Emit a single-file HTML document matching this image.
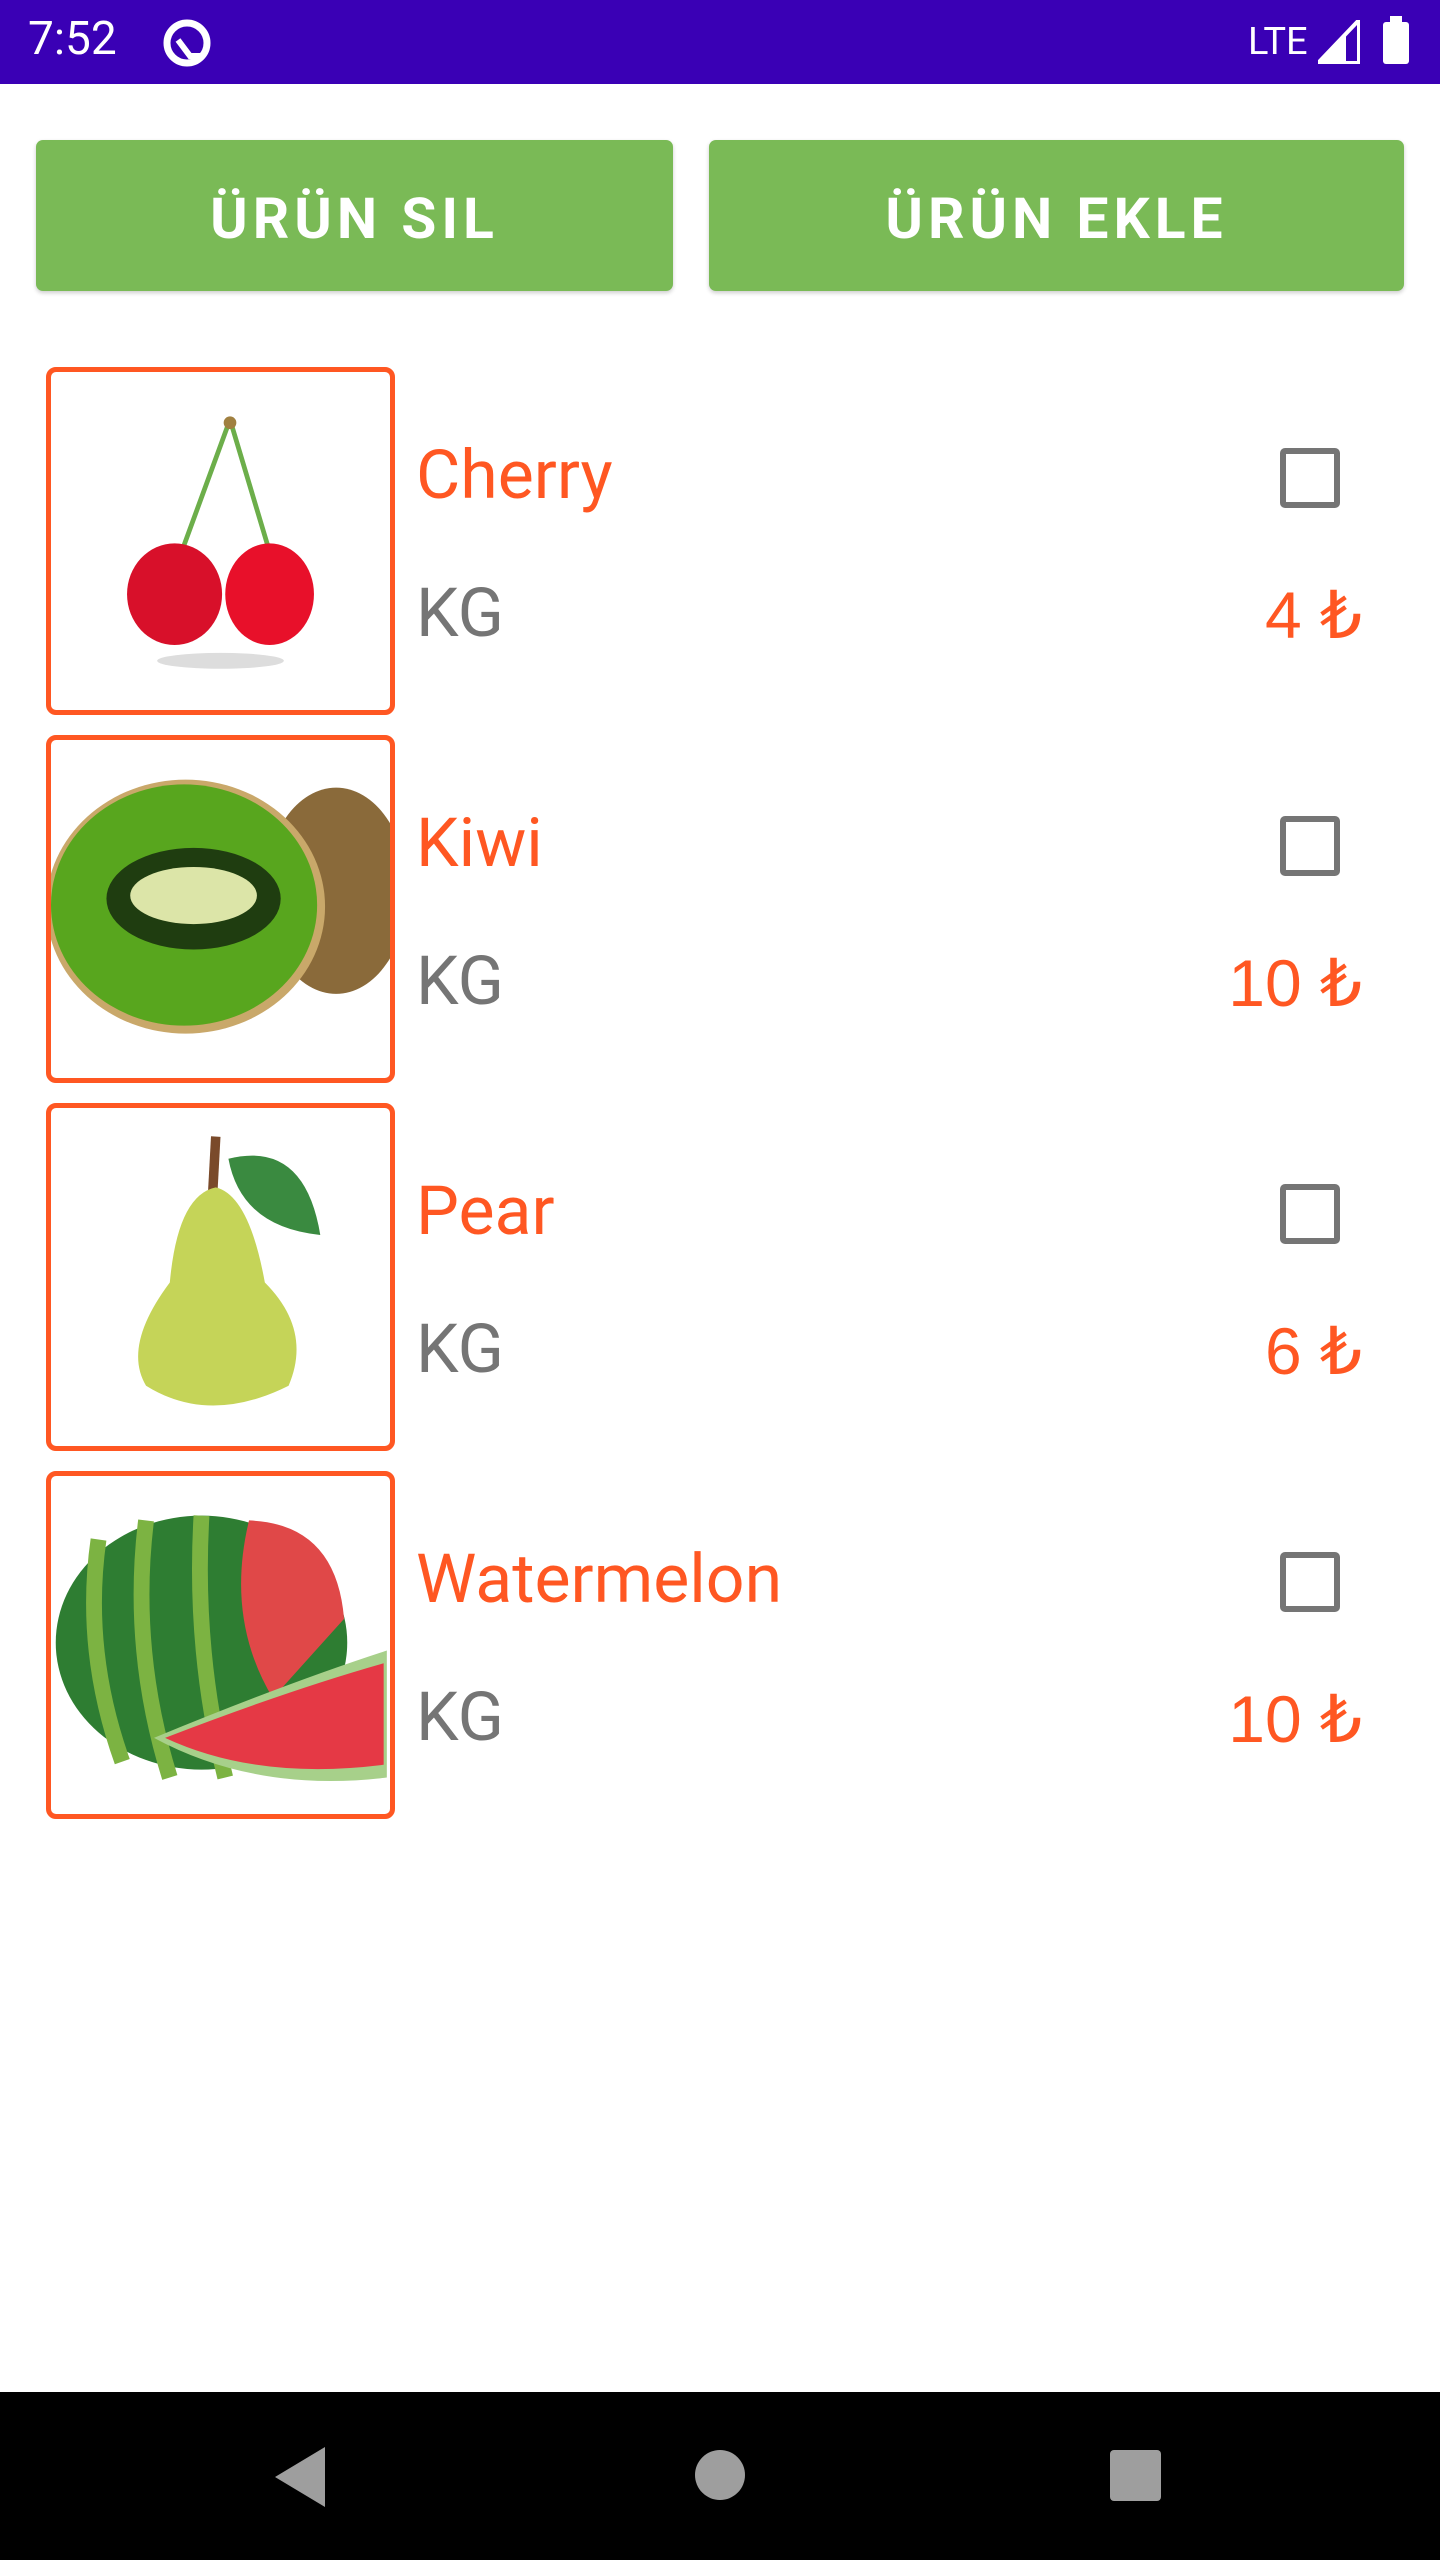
<!DOCTYPE html>
<html><head><meta charset="utf-8"><style>
*{margin:0;padding:0;box-sizing:border-box}
body{width:1440px;height:2560px;background:#fff;position:relative;overflow:hidden;font-family:"Roboto","Liberation Sans",sans-serif}
.status{position:absolute;left:0;top:0;width:1440px;height:84px;background:#3a00b5;color:#fff}
.btn{position:absolute;top:140px;height:151px;background:#7aba56;border-radius:7px;color:#fff;font-size:57px;font-weight:bold;letter-spacing:5px;display:flex;align-items:center;justify-content:center;box-shadow:0 2px 4px rgba(0,0,0,.2);padding-top:6px}
.item{position:absolute;left:0;width:1440px;height:368px}
.img{position:absolute;left:46px;top:0;width:349px;height:348px;border:5px solid #ff5722;border-radius:10px;overflow:hidden;background:#fff}
.img svg{width:100%;height:100%;display:block}
.name{position:absolute;left:416px;top:68px;font-size:68px;color:#ff5722}
.kg{position:absolute;left:416px;top:206px;font-size:68px;color:#757575}
.price{position:absolute;right:78px;top:210px;font-size:66px;color:#ff5722;font-family:"Liberation Sans","DejaVu Sans",sans-serif}
.cb{position:absolute;left:1280px;top:81px;width:60px;height:60px;border:6px solid #757575;border-radius:5px}
.nav{position:absolute;left:0;top:2392px;width:1440px;height:168px;background:#000}
</style></head><body>
<div class="status">
<div style="position:absolute;left:28px;top:12px;font-size:46px">7:52</div>
<svg style="position:absolute;left:160px;top:16px" width="54" height="54" viewBox="0 0 54 54"><circle cx="27" cy="27" r="20" fill="none" stroke="#fff" stroke-width="7"/><path d="M18 24 L30 40 L40 40" stroke="#fff" stroke-width="6" fill="none"/></svg>
<div style="position:absolute;left:1248px;top:20px;font-size:38px">LTE</div>
<svg style="position:absolute;left:1318px;top:20px" width="42" height="44"><path d="M0 43 L41 0 L41 43 Z" fill="none" stroke="#fff" stroke-width="4"/><path d="M0 43 L28 14 L28 43Z" fill="#fff"/></svg>
<div style="position:absolute;left:1383px;top:22px;width:26px;height:42px;background:#fff;border-radius:3px"></div>
<div style="position:absolute;left:1390px;top:16px;width:12px;height:8px;background:#fff"></div>
</div>
<div class="btn" style="left:36px;width:637px">ÜRÜN SIL</div>
<div class="btn" style="left:709px;width:695px">ÜRÜN EKLE</div>

<div class="item" style="top:367px">
<div class="img"><svg viewBox="0 0 214 213" preserveAspectRatio="none">
<ellipse cx="107" cy="182" rx="40" ry="5" fill="#ddd"/>
<path d="M113 30 L80 120 M113 30 L140 120" stroke="#6cae4a" stroke-width="3" fill="none"/>
<circle cx="113" cy="32" r="4" fill="#a08040"/>
<ellipse cx="78" cy="140" rx="30" ry="32" fill="#d8102a"/>
<ellipse cx="138" cy="140" rx="28" ry="32" fill="#e8102a"/>
</svg></div>
<div class="name">Cherry</div><div class="kg">KG</div><div class="cb"></div><div class="price">4 ₺</div></div>

<div class="item" style="top:735px">
<div class="img"><svg viewBox="0 0 214 213" preserveAspectRatio="none">
<ellipse cx="180" cy="95" rx="45" ry="65" fill="#8a6a3a"/>
<ellipse cx="85" cy="105" rx="88" ry="80" fill="#c9a86a"/>
<ellipse cx="84" cy="104" rx="84" ry="76" fill="#58a61e"/>
<ellipse cx="90" cy="100" rx="55" ry="32" fill="#1f3d10"/>
<ellipse cx="90" cy="98" rx="40" ry="18" fill="#dce5a8"/>
</svg></div>
<div class="name">Kiwi</div><div class="kg">KG</div><div class="cb"></div><div class="price">10 ₺</div></div>

<div class="item" style="top:1103px">
<div class="img"><svg viewBox="0 0 214 213" preserveAspectRatio="none">
<path d="M102 55 L104 18" stroke="#7a4a2a" stroke-width="6"/>
<path d="M112 32 Q160 20 170 80 Q120 75 112 32Z" fill="#3a8a40"/>
<path d="M104 50 Q80 55 75 110 Q45 150 60 175 Q100 200 150 175 Q165 140 135 110 Q125 55 104 50Z" fill="#c5d458"/>
</svg></div>
<div class="name">Pear</div><div class="kg">KG</div><div class="cb"></div><div class="price">6 ₺</div></div>

<div class="item" style="top:1471px">
<div class="img"><svg viewBox="0 0 214 213" preserveAspectRatio="none">
<ellipse cx="95" cy="105" rx="92" ry="80" fill="#2e7d32"/>
<path d="M30 40 Q20 110 45 180 M60 28 Q50 110 75 190 M95 25 Q90 110 110 190" stroke="#7cb342" stroke-width="10" fill="none"/>
<path d="M125 28 Q180 30 185 90 L140 140 Q110 90 125 28Z" fill="#e04848"/>
<path d="M65 165 Q150 130 212 110 L212 190 Q130 200 65 165Z" fill="#a7d08a"/>
<path d="M72 165 Q150 135 210 118 L210 182 Q130 192 72 165Z" fill="#e53945"/>
</svg></div>
<div class="name">Watermelon</div><div class="kg">KG</div><div class="cb"></div><div class="price">10 ₺</div></div>

<div class="nav">
<svg style="position:absolute;left:270px;top:55px" width="60" height="60"><path d="M55 0 L55 60 L5 30Z" fill="#9e9e9e"/></svg>
<div style="position:absolute;left:695px;top:58px;width:50px;height:50px;border-radius:50%;background:#9e9e9e"></div>
<div style="position:absolute;left:1110px;top:58px;width:51px;height:51px;border-radius:4px;background:#9e9e9e"></div>
</div>
</body></html>
